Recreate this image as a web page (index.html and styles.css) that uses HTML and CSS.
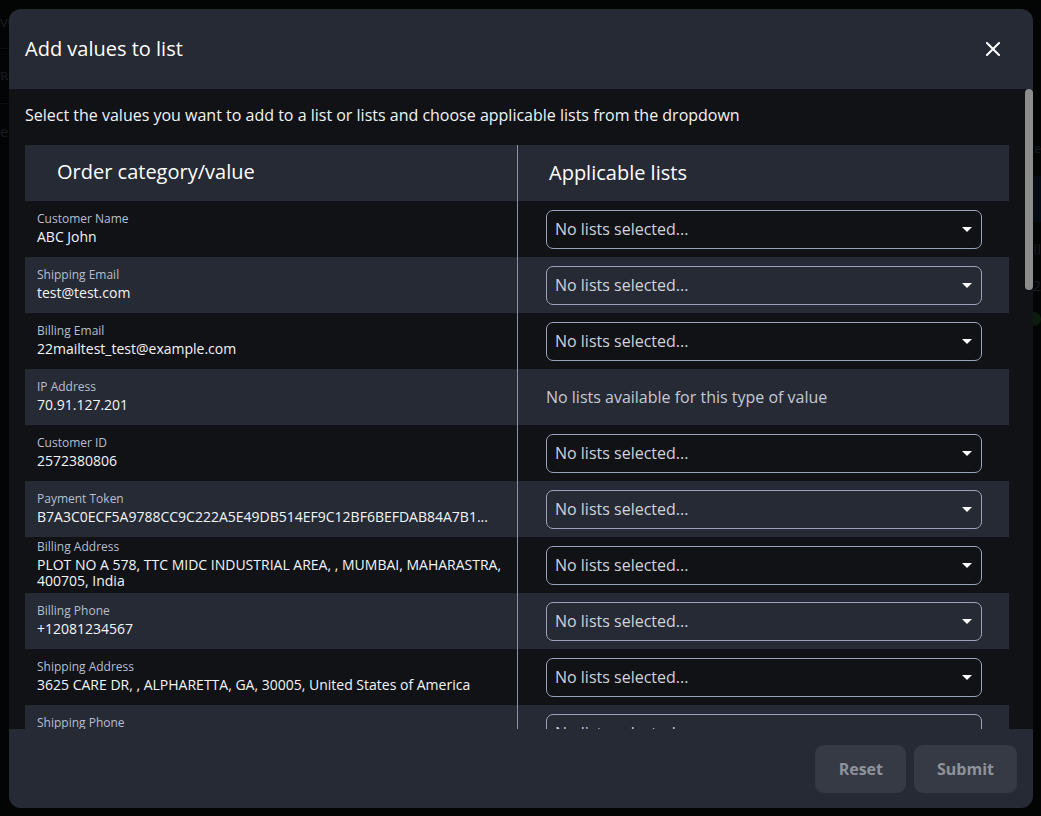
FILE: index.html
```html
<!DOCTYPE html>
<html lang="en">
<head>
<meta charset="utf-8">
<title>Add values to list</title>
<link rel="stylesheet" href="styles.css">
</head>
<body>
<div class="page">
  <div class="page-left">
    <div class="ghost">ve</div>
    <div class="ghost-line"></div>
    <div class="ghost serif">Re</div>
    <div class="ghost-line"></div>
    <div class="ghost">e</div>
  </div>
  <div class="page-right">
    <div class="ghost small">Re</div>
    <div class="ghost-btn"></div>
    <div class="ghost">ill</div>
    <div class="ghost">2</div>
    <div class="ghost-dot"></div>
  </div>
</div>

<div class="overlay">
  <div class="modal">
    <div class="modal-header">
      <h1 class="modal-title">Add values to list</h1>
      <button class="close-btn" aria-label="Close">
        <svg width="14" height="14" viewBox="0 0 14 14"><path d="M1 1L13 13M13 1L1 13" stroke="#ffffff" stroke-width="2" stroke-linecap="square"/></svg>
      </button>
    </div>
    <div class="modal-body">
      <div class="scroll-content">
        <p class="intro">Select the values you want to add to a list or lists and choose applicable lists from the dropdown</p>
        <div class="table">
          <div class="row head">
            <div class="cell-left"><span class="th th-left">Order category/value</span></div>
            <div class="cell-right"><span class="th">Applicable lists</span></div>
          </div>

          <div class="row dark">
            <div class="cell-left"><div class="label">Customer Name</div><div class="value">ABC John</div></div>
            <div class="cell-right"><div class="select"><span>No lists selected...</span><span class="caret"></span></div></div>
          </div>
          <div class="row light">
            <div class="cell-left"><div class="label">Shipping Email</div><div class="value">test@test.com</div></div>
            <div class="cell-right"><div class="select"><span>No lists selected...</span><span class="caret"></span></div></div>
          </div>
          <div class="row dark">
            <div class="cell-left"><div class="label">Billing Email</div><div class="value">22mailtest_test@example.com</div></div>
            <div class="cell-right"><div class="select"><span>No lists selected...</span><span class="caret"></span></div></div>
          </div>
          <div class="row light">
            <div class="cell-left"><div class="label">IP Address</div><div class="value">70.91.127.201</div></div>
            <div class="cell-right"><div class="none">No lists available for this type of value</div></div>
          </div>
          <div class="row dark">
            <div class="cell-left"><div class="label">Customer ID</div><div class="value">2572380806</div></div>
            <div class="cell-right"><div class="select"><span>No lists selected...</span><span class="caret"></span></div></div>
          </div>
          <div class="row light">
            <div class="cell-left"><div class="label">Payment Token</div><div class="value nowrap">B7A3C0ECF5A9788CC9C222A5E49DB514EF9C12BF6BEFDAB84A7B1...</div></div>
            <div class="cell-right"><div class="select"><span>No lists selected...</span><span class="caret"></span></div></div>
          </div>
          <div class="row dark">
            <div class="cell-left tight"><div class="label">Billing Address</div><div class="value">PLOT NO A 578, TTC MIDC INDUSTRIAL AREA, , MUMBAI, MAHARASTRA, 400705, India</div></div>
            <div class="cell-right"><div class="select"><span>No lists selected...</span><span class="caret"></span></div></div>
          </div>
          <div class="row light">
            <div class="cell-left"><div class="label">Billing Phone</div><div class="value">+12081234567</div></div>
            <div class="cell-right"><div class="select"><span>No lists selected...</span><span class="caret"></span></div></div>
          </div>
          <div class="row dark">
            <div class="cell-left"><div class="label">Shipping Address</div><div class="value">3625 CARE DR, , ALPHARETTA, GA, 30005, United States of America</div></div>
            <div class="cell-right"><div class="select"><span>No lists selected...</span><span class="caret"></span></div></div>
          </div>
          <div class="row light">
            <div class="cell-left"><div class="label">Shipping Phone</div><div class="value">+12081234567</div></div>
            <div class="cell-right"><div class="select"><span>No lists selected...</span><span class="caret"></span></div></div>
          </div>
        </div>
      </div>
      <div class="scrollbar"><div class="thumb"></div></div>
    </div>
    <div class="modal-footer">
      <button class="btn btn-reset">Reset</button>
      <button class="btn">Submit</button>
    </div>
  </div>
</div>
</body>
</html>
```

FILE: styles.css
```css
* { box-sizing: border-box; }

html, body {
  margin: 0;
  padding: 0;
  height: 100%;
}

body {
  background: #08090b;
  font-family: "Open Sans", "Noto Sans", sans-serif;
  color: #f2f3f5;
  overflow: hidden;
}

/* faint page behind the dialog */
.page {
  display: flex;
  justify-content: space-between;
  height: 100%;
}
.page-left, .page-right {
  width: 40px;
  display: flex;
  flex-direction: column;
  gap: 18px;
  padding-top: 12px;
  color: #3a3d44;
  font-size: 15px;
}
.page-right {
  align-items: flex-end;
  padding-top: 140px;
}
.ghost { line-height: 18px; }
.ghost.serif { font-family: "Liberation Serif", serif; font-size: 13px; }
.ghost.small { font-size: 12px; }
.ghost-line { height: 1px; background: #1c1e22; width: 100%; }
.ghost-btn { width: 30px; height: 46px; background: #0c1a2b; border-radius: 8px 0 0 8px; }
.ghost-dot { width: 14px; height: 14px; border-radius: 50%; background: #1e3a1f; }

/* overlay + modal */
.overlay {
  position: fixed;
  inset: 0;
  background: rgba(0, 0, 0, 0.55);
  padding: 9px 8px 8px 9px;
  display: flex;
}

.modal {
  flex: 1;
  display: flex;
  flex-direction: column;
  border-radius: 12px;
  overflow: hidden;
  background: #111216;
}

.modal-header {
  height: 80px;
  flex: none;
  background: #262a34;
  display: flex;
  align-items: center;
  justify-content: space-between;
  padding: 0 30px 0 16px;
}

.modal-title {
  margin: 0;
  font-size: 20px;
  font-weight: 400;
  color: #ffffff;
  line-height: 28px;
}

.close-btn {
  background: none;
  border: 0;
  padding: 0;
  width: 20px;
  height: 20px;
  display: flex;
  align-items: center;
  justify-content: center;
  cursor: pointer;
}

.modal-body {
  flex: 1;
  min-height: 0;
  display: flex;
  background: #111216;
}

.scroll-content {
  flex: 1;
  overflow: hidden;
  padding: 15px 16px 0 16px;
}

.scrollbar {
  width: 8px;
  flex: none;
  background: #111216;
}
.thumb {
  height: 201px;
  background: #8c8c8c;
  border-radius: 4px;
}

.intro {
  margin: 0 0 19px 0;
  font-size: 16px;
  line-height: 22px;
  color: #f2f3f5;
}

.table {
  display: flex;
  flex-direction: column;
}

.row {
  display: grid;
  grid-template-columns: 493px 1fr;
  min-height: 56px;
}
.row.head, .row.light { background: #262a34; }
.row.dark { background: #111216; }

.cell-left {
  border-right: 1px solid #8a93a8;
  display: flex;
  flex-direction: column;
  justify-content: center;
  gap: 2px;
  padding: 8px 14px 10px 12px;
}
.cell-left.tight { padding-top: 2px; padding-bottom: 4px; }

.cell-right {
  display: flex;
  align-items: center;
  padding: 0 27px 0 28px;
}

.th {
  font-size: 20px;
  color: #ffffff;
  line-height: 28px;
  padding-left: 3px;
}
.th-left { padding-left: 20px; }

.label {
  font-size: 12px;
  line-height: 16px;
  color: #b6bfd0;
}
.value {
  font-size: 14px;
  line-height: 16px;
  color: #f4f5f7;
}
.value.nowrap { white-space: nowrap; overflow: hidden; }

.select {
  flex: 1;
  height: 39px;
  border: 1px solid #9aa3b7;
  border-radius: 7px;
  display: flex;
  align-items: center;
  justify-content: space-between;
  padding: 0 9px 0 8px;
  font-size: 16px;
  color: #cfd3db;
}
.caret {
  width: 0;
  height: 0;
  border-left: 5px solid transparent;
  border-right: 5px solid transparent;
  border-top: 5px solid #ffffff;
}

.none {
  font-size: 16px;
  color: #c3c9d5;
}

.modal-footer {
  height: 79px;
  flex: none;
  background: #262a34;
  display: flex;
  justify-content: flex-end;
  align-items: center;
  gap: 8px;
  padding: 0 16px;
}

.btn {
  height: 48px;
  border: 0;
  border-radius: 9px;
  background: #363a45;
  color: #8e929b;
  font-family: "Open Sans", "Noto Sans", sans-serif;
  font-size: 16px;
  font-weight: 700;
  padding: 0 23px;
}
.btn-reset { padding: 0 23px 0 24px; }
```
